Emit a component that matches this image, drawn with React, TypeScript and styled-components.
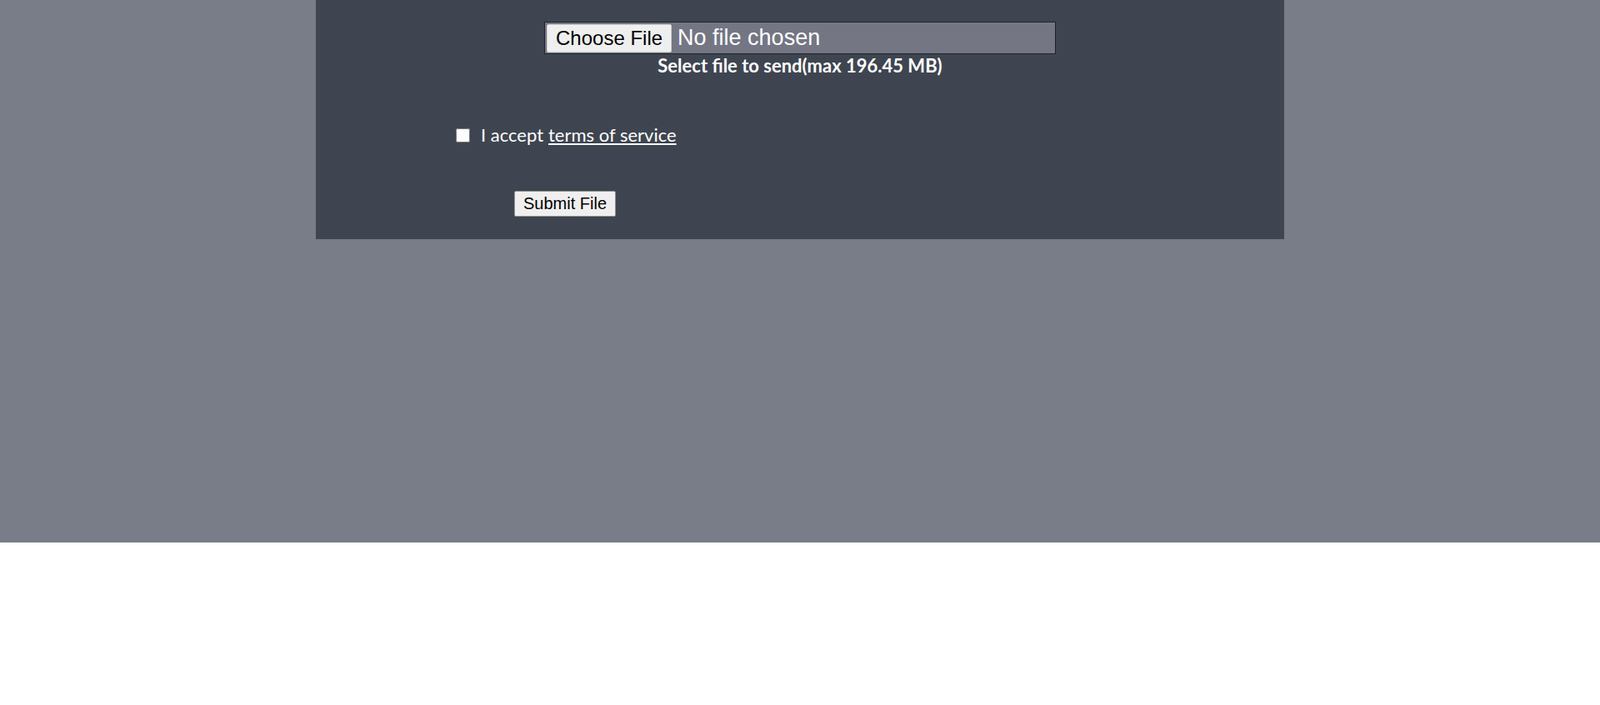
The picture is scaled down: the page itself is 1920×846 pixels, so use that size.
import React from "react";
import styled, { createGlobalStyle } from "styled-components";

const Global = createGlobalStyle`
  html, body { margin: 0; padding: 0; background: #ffffff; }
  body { font-family: "Lato", "Liberation Sans", sans-serif; }
`;

const Page = styled.div`
  background: #797d88;
  height: 651px;
`;

const Panel = styled.form`
  width: 1162px;
  height: 287px;
  margin: 0 auto;
  background: #3e4550;
  box-sizing: border-box;
  padding-top: 26px;
  display: flex;
  flex-direction: column;
`;

const UploadBlock = styled.div`
  display: flex;
  flex-direction: column;
  align-items: center;
`;

const FileInput = styled.input`
  width: 614px;
  height: 39px;
  box-sizing: border-box;
  margin: 0;
  padding: 2px;
  border: 1px solid #1f242b;
  background: #747683;
  color: #ffffff;
  font-family: "Liberation Sans", Arial, sans-serif;
  font-size: 27px;

  &::file-selector-button {
    font-family: "Liberation Sans", Arial, sans-serif;
    font-size: 24px;
    color: #000000;
    background: #efefef;
    border: 1px solid #d0d0d0;
    border-radius: 2px;
    height: 34px;
    padding: 0 10px;
    margin: 0 7px 0 0;
  }
`;

const Caption = styled.div`
  margin-top: 2px;
  color: #ffffff;
  font-family: "Lato", "Liberation Sans", sans-serif;
  font-weight: 700;
  font-size: 22px;
  line-height: 24px;
`;

const TermsRow = styled.label`
  display: flex;
  align-items: center;
  margin-top: 58px;
  padding-left: 168px;
  color: #ffffff;
  font-family: "Lato", "Liberation Sans", sans-serif;
  font-size: 22px;
  line-height: 26px;
`;

const Check = styled.input`
  width: 17px;
  height: 17px;
  margin: 0 13px 0 0;
`;

const Terms = styled.a`
  color: #ffffff;
  text-decoration: underline;
  margin-left: 6px;
`;

const SubmitRow = styled.div`
  margin-top: 54px;
  padding-left: 238px;
`;

const SubmitButton = styled.button`
  height: 31px;
  box-sizing: border-box;
  padding: 0 10px;
  background: #efefef;
  color: #000000;
  border: 1px solid #8f8f8f;
  border-radius: 2px;
  font-family: "Liberation Sans", Arial, sans-serif;
  font-size: 20px;
`;

export default function App() {
  return (
    <>
      <Global />
      <Page>
        <Panel onSubmit={(e) => e.preventDefault()}>
          <UploadBlock>
            <FileInput type="file" />
            <Caption>Select file to send(max 196.45 MB)</Caption>
          </UploadBlock>
          <TermsRow>
            <Check type="checkbox" />
            I accept<Terms href="#">terms of service</Terms>
          </TermsRow>
          <SubmitRow>
            <SubmitButton type="submit">Submit File</SubmitButton>
          </SubmitRow>
        </Panel>
      </Page>
    </>
  );
}
